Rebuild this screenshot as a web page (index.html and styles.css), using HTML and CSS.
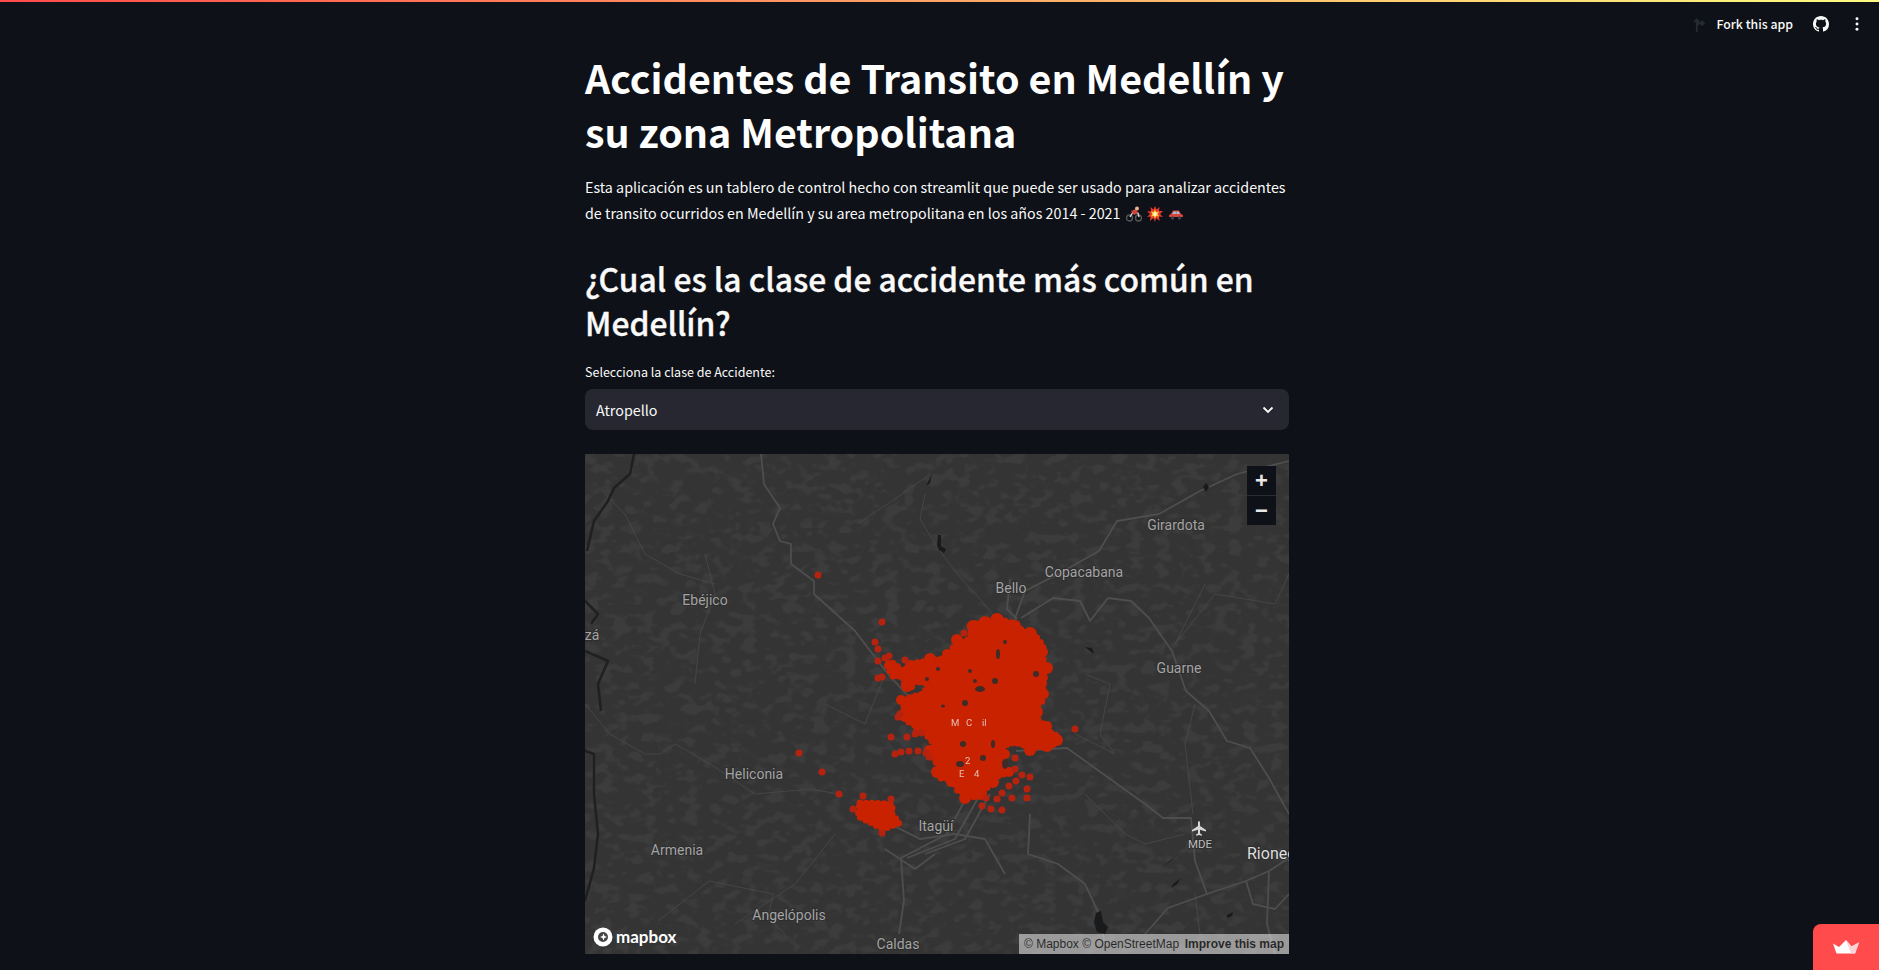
FILE: index.html
```html
<!DOCTYPE html>
<html lang="es">
<head>
<meta charset="utf-8">
<title>Accidentes de Transito en Medellín</title>
<link rel="stylesheet" href="styles.css">
</head>
<body>
<div class="decoration"></div>
<header class="toolbar">
  <svg class="fork-icon" viewBox="0 0 16 24" width="14" height="18"><path d="M5 23V6M1.500 9.500 5 6l3.500 3.500M5 15c0-3 2-4 5-4h4M11 8l3.500 3L11 14" fill="none" stroke="#262a33" stroke-width="2.400"/></svg>
  <span class="fork-label">Fork this app</span>
  <svg class="github-icon" viewBox="0 0 16 16" width="16" height="16"><path fill="#fafafa" d="M8 0C3.580 0 0 3.580 0 8c0 3.540 2.290 6.530 5.470 7.590.4.070.55-.17.55-.38 0-.19-.01-.82-.01-1.490-2.010.37-2.530-.49-2.690-.94-.09-.23-.48-.94-.82-1.130-.28-.15-.68-.52-.01-.53.630-.01 1.080.58 1.230.82.720 1.210 1.870.87 2.330.66.070-.52.280-.87.510-1.070-1.780-.2-3.640-.89-3.640-3.950 0-.87.310-1.590.820-2.150-.08-.2-.36-1.020.08-2.120 0 0 .670-.21 2.200.82.640-.18 1.320-.27 2-.27s1.360.09 2 .27c1.530-1.040 2.200-.82 2.200-.82.440 1.100.160 1.920.080 2.120.51.560.82 1.270.82 2.150 0 3.070-1.870 3.750-3.650 3.950.29.250.54.730.54 1.480 0 1.070-.01 1.930-.01 2.200 0 .21.150.46.550.38A8.010 8.010 0 0 0 16 8c0-4.420-3.580-8-8-8z"/></svg>
  <svg class="kebab-icon" viewBox="0 0 4 16" width="4" height="14"><circle cx="2" cy="2" r="1.700" fill="#fafafa"/><circle cx="2" cy="8" r="1.700" fill="#fafafa"/><circle cx="2" cy="14" r="1.700" fill="#fafafa"/></svg>
</header>

<main class="content">
  <h1 class="title">Accidentes de Transito en Medellín y su zona Metropolitana</h1>
  <p class="intro">Esta aplicación es un tablero de control hecho con streamlit que puede ser usado para analizar accidentes de transito ocurridos en Medellín y su area metropolitana en los años 2014 - 2021
    <svg class="emoji" viewBox="0 0 16 16" width="16" height="16"><circle cx="3.500" cy="12" r="3" fill="none" stroke="#555" stroke-width="1.400"/><circle cx="12.500" cy="12" r="3" fill="none" stroke="#555" stroke-width="1.400"/><path d="M4 11 7 6l5 1 1 4" fill="none" stroke="#d9d9d9" stroke-width="1.300"/><path d="M5 5l5-2 2 4-4 2z" fill="#d0423a"/><circle cx="11" cy="2.500" r="2" fill="#e9b48c"/></svg>
    <svg class="emoji" viewBox="0 0 16 16" width="16" height="16"><path d="M8 0l1.500 3.500L12.500 1l-.5 4L16 5l-3 3 3 3-4-.5.500 4.500-3.500-3L8 16l-1.500-4L3 15l.5-4.500L0 11l3-3-3-3 4 .5L3.500 1l3 2.500z" fill="#e8392b"/><path d="M8 3.500l1.200 2.500 2.800-.5-1.500 2.500 1.500 2.500-2.800-.5L8 12.500 6.800 10l-2.800.5L5.500 8 4 5.500l2.800.5z" fill="#ffd23f"/><circle cx="8" cy="8" r="1.700" fill="#fff7d6"/></svg>
    <svg class="emoji" viewBox="0 0 16 16" width="16" height="16"><path d="M1 11V9l2-1 2-3.500h6L13 8l2 1v2z" fill="#d8453c"/><path d="M5.800 5.500h2v2.500H4.300zM8.500 5.500h2l1.300 2.500H8.500z" fill="#9cc7e6"/><circle cx="4.500" cy="12" r="1.800" fill="#3a3f4a"/><circle cx="11.500" cy="12" r="1.800" fill="#3a3f4a"/></svg>
  </p>
  <h2 class="subtitle">¿Cual es la clase de accidente más común en Medellín?</h2>
  <label class="field-label">Selecciona la clase de Accidente:</label>
  <div class="select">
    <span>Atropello</span>
    <svg viewBox="0 0 12 8" width="12" height="8"><path d="M1.500 1.500 6 6l4.500-4.500" fill="none" stroke="#fafafa" stroke-width="1.800"/></svg>
  </div>

  <section class="map">
    <svg class="map-canvas" viewBox="0 0 704 500" width="704" height="500">
      <defs>
        <filter id="terrain" x="0" y="0" width="100%" height="100%">
          <feTurbulence type="fractalNoise" baseFrequency="0.07 0.1" numOctaves="2" seed="11"/>
          <feColorMatrix type="matrix" values="0 0 0 0 1  0 0 0 0 1  0 0 0 0 1  1.800 1.800 0 0 -1.350"/>
          <feComponentTransfer><feFuncA type="discrete" tableValues="0 0 0 .015 .028 .04"/></feComponentTransfer>
        </filter>
      </defs>
      <rect width="704" height="500" fill="#343434"/>
      <rect width="704" height="500" filter="url(#terrain)"/>

      <g class="boundary">
        <path d="M73 467 124 427 188 440 183 464 200 480"/>
        <path d="M0 250 25 280 60 300 75 300 90 290 125 310 170 340 225 335 254 340"/>
        <path d="M340 40 335 65 350 90 372 120 395 145 412 165"/>
        <path d="M345 20 310 45 272 70"/>
        <path d="M120 100 130 140 115 180 110 230"/>
        <path d="M500 220 525 230 515 280 530 300 490 280"/>
        <path d="M620 130 590 190 630 140 690 150 704 120"/>
        <path d="M20 40 40 60 60 100 95 120 130 130"/>
        <path d="M610 440 615 480 640 500"/>
        <path d="M500 340 540 380 560 390 600 380"/>
        <path d="M240 250 280 270 300 220"/>
        <path d="M610 250 600 290 608 360"/>
        <path d="M250 380 210 430 150 470"/>
      </g>

      <g class="road">
        <path d="M176 0 179 30 195 54 188 70 195 87 206 90 206 110 229 127 229 140 270 177 303 220 335 255"/>
        <path d="M704 7 652 20 615 37 574 60 532 67 514 97 473 120 440 137 429 167"/>
        <path d="M436 164 468 144 495 147 505 167 523 144 546 147 564 164 587 197 601 237 624 257 642 287 665 294 684 324 704 360"/>
        <path d="M431 297 482 294 560 350 578 364 606 364 610 407 622 440 583 454 560 480"/>
        <path d="M622 440 661 427 684 417 704 404"/>
        <path d="M381 344 362 380 316 404 319 447 314 480"/>
        <path d="M393 344 370 385 322 404"/>
        <path d="M405 340 380 385 340 400"/>
        <path d="M445 360 443 400 473 410 500 430 514 460 520 490"/>
        <path d="M305 370 335 385 370 380 400 385 420 420"/>
        <path d="M300 395 330 415 350 400"/>
        <path d="M425 125 422 155 432 165"/>
        <path d="M661 427 668 450 690 455 704 440"/>
        <path d="M684 417 682 470 690 500"/>
      </g>

      <g class="river">
        <path d="M49 0 45 20 29 34 23 47 9 67 2 97"/>
        <path d="M0 147 13 160 6 170"/>
        <path d="M0 197 23 207 13 230 16 257"/>
        <path d="M0 297 9 300 9 340 13 380 9 414 0 447"/>
      </g>

      <g class="lake">
        <path d="M353 81h3v11l5 3-2 4-5-3-2-4z"/>
        <path d="M347 20l-4 8-2 4 4-3z"/>
        <path d="M500 193l7 1 2 6-4-3z"/>
        <path d="M618 33l3-4 3 4-3 5z"/>
        <path d="M511 459l5-2 2 11 5 5-3 7-8-2-3-10z"/>
        <path d="M642 461l6-3-1 4-5 2z"/>
        <path d="M596 424l-8 6-2 4 6-4zM593 400l-14 12 6-4z"/>
      </g>

      <g class="label">
        <text x="591" y="76">Girardota</text>
        <text x="499" y="123">Copacabana</text>
        <text x="426" y="139">Bello</text>
        <text x="120" y="151">Ebéjico</text>
        <text x="7" y="186">zá</text>
        <text x="594" y="219">Guarne</text>
        <text x="169" y="325">Heliconia</text>
        <text x="351" y="377">Itagüí</text>
        <text x="92" y="401">Armenia</text>
        <text x="204" y="466">Angelópolis</text>
        <text x="313" y="495">Caldas</text>
      </g>
      <text class="label-mde" x="615" y="394">MDE</text>
      <path class="plane" d="M614 367c.8 0 1 1 1 2v3l6 4v1.500l-6-1.800v3.500l2 1.500v1l-3-.8-3 .8v-1l2-1.500v-3.500l-6 1.800V376l6-4v-3c0-1 .2-2 1-2z"/>
      <text class="label-city" x="662" y="405">Rioneg</text>

      <g class="blob">
        <path d="M385 172 392 169 415 166 427 169 435 175 452 184 458 192 458 204 460 219 458 234 457 247 452 252 448 262 458 270 460 275 472 282 470 290 448 294 432 289 423 289 415 297 418 310 422 319 405 324 402 334 392 344 382 340 373 337 368 325 355 324 355 314 347 302 350 294 347 287 340 279 332 272 322 267 318 257 320 245 338 240 345 230 330 227 325 235 320 234 318 222 308 222 302 212 308 209 318 217 330 209 343 207 363 204 370 190 382 187 387 179Z"/>
        <path d="M275 349 307 350 307 360 314 369 298 375 287 369 273 362Z"/>
      </g>

      <g class="lumps">
        <circle cx="388" cy="172" r="6"/><circle cx="400" cy="168" r="6"/><circle cx="412" cy="166" r="7"/><circle cx="430" cy="172" r="6"/><circle cx="445" cy="180" r="7"/><circle cx="458" cy="198" r="5"/><circle cx="462" cy="214" r="6"/><circle cx="459" cy="240" r="5"/><circle cx="452" cy="258" r="6"/><circle cx="462" cy="272" r="5"/><circle cx="472" cy="286" r="6"/><circle cx="462" cy="292" r="6"/><circle cx="445" cy="296" r="6"/><circle cx="420" cy="300" r="5"/><circle cx="424" cy="318" r="5"/><circle cx="408" cy="328" r="6"/><circle cx="396" cy="340" r="6"/><circle cx="380" cy="344" r="6"/><circle cx="366" cy="328" r="5"/><circle cx="352" cy="318" r="6"/><circle cx="344" cy="296" r="5"/><circle cx="334" cy="274" r="6"/><circle cx="320" cy="262" r="6"/><circle cx="316" cy="246" r="5"/><circle cx="322" cy="232" r="6"/><circle cx="310" cy="220" r="5"/><circle cx="304" cy="210" r="4"/><circle cx="326" cy="212" r="6"/><circle cx="345" cy="205" r="6"/><circle cx="362" cy="200" r="5"/><circle cx="372" cy="186" r="6"/>
      </g>

      <g class="dots">
        <circle cx="297" cy="168" r="3.500"/><circle cx="290" cy="188" r="3.500"/><circle cx="293" cy="195" r="3.500"/><circle cx="293" cy="207" r="3.500"/><circle cx="300" cy="204" r="3.500"/><circle cx="304" cy="202" r="3.500"/><circle cx="320" cy="206" r="3.500"/><circle cx="379" cy="179" r="3.500"/><circle cx="490" cy="275" r="3.500"/><circle cx="293" cy="224" r="3.500"/><circle cx="297" cy="223" r="3.500"/><circle cx="313" cy="263" r="3.500"/><circle cx="315" cy="260" r="3.500"/><circle cx="306" cy="283" r="3.500"/><circle cx="322" cy="283" r="3.500"/><circle cx="330" cy="280" r="3.500"/><circle cx="336" cy="279" r="3.500"/><circle cx="310" cy="300" r="3.500"/><circle cx="316" cy="298" r="3.500"/><circle cx="324" cy="297" r="3.500"/><circle cx="333" cy="297" r="3.500"/><circle cx="341" cy="299" r="3.500"/><circle cx="344" cy="303" r="3.500"/><circle cx="233" cy="121" r="3.500"/><circle cx="214" cy="299" r="3.500"/><circle cx="237" cy="318" r="3.500"/><circle cx="254" cy="340" r="3.500"/><circle cx="278" cy="342" r="3.500"/><circle cx="306" cy="345" r="3.500"/><circle cx="268" cy="355" r="3.500"/><circle cx="297" cy="379" r="3.500"/><circle cx="397" cy="352" r="3.500"/><circle cx="406" cy="355" r="3.500"/><circle cx="417" cy="356" r="3.500"/><circle cx="412" cy="345" r="3.500"/><circle cx="401" cy="344" r="3.500"/><circle cx="427" cy="344" r="3.500"/><circle cx="442" cy="344" r="3.500"/><circle cx="442" cy="335" r="3.500"/><circle cx="445" cy="323" r="3.500"/><circle cx="437" cy="321" r="3.500"/><circle cx="430" cy="304" r="3.500"/><circle cx="430" cy="315" r="3.500"/><circle cx="431" cy="327" r="3.500"/><circle cx="417" cy="339" r="3.500"/><circle cx="424" cy="332" r="3.500"/>
      </g>

      <g class="holes">
        <ellipse cx="413" cy="200" rx="2" ry="5"/><ellipse cx="451" cy="220" rx="3" ry="3"/><ellipse cx="420" cy="188" rx="2" ry="2"/><ellipse cx="410" cy="227" rx="3" ry="3"/><ellipse cx="395" cy="235" rx="5" ry="3"/><ellipse cx="380" cy="249" rx="3" ry="3"/><ellipse cx="378" cy="290" rx="3" ry="3"/><ellipse cx="408" cy="290" rx="2" ry="4"/><ellipse cx="375" cy="310" rx="4" ry="3"/><ellipse cx="398" cy="304" rx="3" ry="3"/><ellipse cx="420" cy="310" rx="3" ry="5"/><ellipse cx="353" cy="215" rx="2" ry="2"/><ellipse cx="342" cy="225" rx="2" ry="2"/><ellipse cx="385" cy="217" rx="2" ry="2"/><ellipse cx="390" cy="227" rx="2" ry="2"/><ellipse cx="358" cy="252" rx="2" ry="1.500"/>
      </g>
      <g class="peek">
        <text x="366" y="272">M</text><text x="381" y="272">C</text><text x="397" y="272">il</text>
        <text x="380" y="310">2</text><text x="374" y="323">E</text><text x="389" y="323">4</text>
      </g>
    </svg>

    <div class="zoom-control">
      <button class="zoom-btn" type="button">+</button>
      <button class="zoom-btn" type="button">−</button>
    </div>

    <div class="mapbox-logo">
      <svg viewBox="0 0 20 20" width="20" height="20"><circle cx="10" cy="10" r="9.500" fill="#fff"/><circle cx="10" cy="10" r="5" fill="#444"/><path d="M10.500 6.500 11.500 9l2.500 1-2.500 1-1 2.500L9.500 11 7 10l2.500-1z" fill="#fff"/></svg>
      <span>mapbox</span>
    </div>

    <div class="attribution">
      <span>© Mapbox © OpenStreetMap</span>
      <strong>Improve this map</strong>
    </div>
  </section>
</main>

<aside class="badge">
  <svg viewBox="0 0 26 14" width="26" height="14"><path d="M0 3.500 6 7 13 0l5.500 6.500L26 2.500 22 13.500H3.500z" fill="#fff"/><path d="M13 0l5.500 6.500 7.500-4-4 11h-4z" fill="#ffd3d6"/></svg>
</aside>
</body>
</html>
```
FILE: styles.css
```css
* { box-sizing: border-box; }

html, body {
  margin: 0;
  height: 970px;
  overflow: hidden;
  background: #0e1117;
}

body {
  color: #fafafa;
  font-family: "Noto Sans CJK SC", "Source Sans Pro", "Noto Sans", sans-serif;
  padding-right: 5px;
}

.decoration {
  position: absolute;
  top: 0;
  left: 0;
  right: 0;
  height: 2px;
  background: linear-gradient(90deg, #ff4b4b, #fffd80);
}

.toolbar {
  position: absolute;
  top: 14px;
  right: 20px;
  height: 20px;
  display: flex;
  align-items: center;
}

.fork-icon { margin-right: 11px; }

.fork-label {
  font-size: 12.300px;
  line-height: 20px;
  font-weight: 500;
  margin-right: 20px;
}

.github-icon { margin-right: 26px; }
.kebab-icon { margin-right: 0; }

.content {
  width: 704px;
  margin: 0 auto;
  padding-top: 50px;
}

.title {
  margin: 0;
  font-size: 39.400px;
  line-height: 54px;
  font-weight: 700;
  color: #fff;
}

.intro {
  margin: 16px 0 0;
  font-size: 14.300px;
  line-height: 25.600px;
}

.emoji {
  vertical-align: -3px;
  margin-left: 2px;
}

.subtitle {
  margin: 31px 0 0;
  font-size: 31.800px;
  line-height: 44px;
  font-weight: 500;
  -webkit-text-stroke: .35px #fafafa;
}

.field-label {
  display: block;
  margin-top: 18px;
  font-size: 12.500px;
  line-height: 20px;
}

.select {
  margin-top: 7px;
  height: 41px;
  padding: 0 15px 0 11px;
  display: flex;
  align-items: center;
  justify-content: space-between;
  background: #262730;
  border-radius: 8px;
  font-size: 14.300px;
}

.map {
  position: relative;
  margin-top: 24px;
  width: 704px;
  height: 500px;
  overflow: hidden;
}

.map-canvas { display: block; }

.boundary path, .road path, .river path {
  fill: none;
  stroke-linejoin: round;
}

.boundary path { stroke: #4a4a4a; stroke-width: .8; }
.road path { stroke: #4e4e4e; stroke-width: 1.800; }
.river path { stroke: #1f2020; stroke-width: 2.500; }
.lake path { fill: #181a1b; }

.label text, .label-mde, .label-city {
  font-family: "Roboto", "Liberation Sans", sans-serif;
  text-anchor: middle;
  paint-order: stroke;
  stroke: #2b2b2b;
  stroke-width: 1.500px;
}

.label text { font-size: 14px; fill: #a4a4a4; }
.label-mde { font-size: 11.500px; fill: #bdbdbd; }
.label-city { font-size: 16px; fill: #dedede; text-anchor: start; }
.plane { fill: #d8d8d8; }

.blob path {
  fill: #c92200;
  stroke: #c92200;
  stroke-width: 7;
  stroke-linecap: round;
  stroke-linejoin: round;
  stroke-dasharray: 0 6;
}

.lumps circle { fill: #c92200; }
.dots circle { fill: #b5230f; }
.holes ellipse { fill: #3f2b27; }

.peek text {
  font-family: "Roboto", "Liberation Sans", sans-serif;
  font-size: 9.500px;
  fill: #e6d8d4;
  opacity: .85;
}

.zoom-control {
  position: absolute;
  top: 12px;
  right: 13px;
  width: 29px;
  display: flex;
  flex-direction: column;
  gap: 1px;
  background: #2a2d33;
}

.zoom-btn {
  width: 29px;
  height: 29px;
  padding: 0;
  border: 0;
  background: #0e1117;
  color: #e8e8e8;
  font: 700 22px/29px "Liberation Sans", sans-serif;
}

.mapbox-logo {
  position: absolute;
  left: 8px;
  bottom: 7px;
  display: flex;
  align-items: center;
  gap: 3px;
  font: 700 17px/20px "Lato", "Noto Sans", sans-serif;
  color: #fff;
}

.attribution {
  position: absolute;
  right: 0;
  bottom: 0;
  height: 20px;
  width: 270px;
  padding: 0 5px;
  display: flex;
  align-items: center;
  justify-content: space-between;
  background: rgba(255, 255, 255, .5);
  color: rgba(0, 0, 0, .75);
  font: 12px/20px "Liberation Sans", sans-serif;
}

.attribution strong { font-weight: 700; }

.badge {
  position: absolute;
  right: 0;
  bottom: 0;
  width: 66px;
  height: 46px;
  padding: 16px 0 0 20px;
  background: #ff4b4b;
  border-top-left-radius: 8px;
}

.badge svg { display: block; }
```
